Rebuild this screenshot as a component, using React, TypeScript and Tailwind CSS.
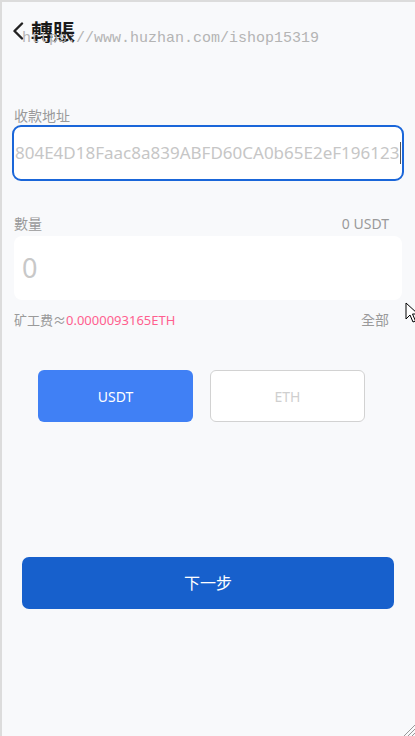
import React from 'react';

const cjk = { fontFamily: '"Noto Sans", "Noto Sans CJK TC", "Noto Sans CJK SC", sans-serif' };

export default function App() {
  return (
    <div
      className="relative w-[415px] h-[736px] overflow-hidden bg-[#f8f9fb] border-l-2 border-t-2 border-[#dcdcdc]"
      style={cjk}
    >
      {/* ─── Header ─── */}
      <div className="flex items-center h-[28px] mt-[15px] pl-[10px]">
        <svg width="12" height="18" viewBox="0 0 12 18" fill="none" className="mr-[7px]">
          <path d="M10 1.5L2.5 9l7.5 7.5" stroke="#222" strokeWidth="2.4" strokeLinecap="round" strokeLinejoin="round" />
        </svg>
        <span className="text-[22px] font-bold text-[#1a1a1a] leading-none">轉賬</span>
      </div>

      {/* watermark */}
      <div
        className="absolute left-[20px] top-[29px] text-[15px] leading-none text-[#b4b4b4] whitespace-nowrap"
        style={{ fontFamily: '"Liberation Mono", monospace' }}
      >
        https://www.huzhan.com/ishop15319
      </div>

      {/* ─── Address ─── */}
      <div className="mt-[62px] pl-[12px] text-[14px] leading-[18px] text-[#9a9a9a]">收款地址</div>
      <div className="ml-[10px] w-[392px] h-[56px] bg-white border-2 border-[#1a66d9] rounded-[9px] flex items-center overflow-hidden">
        <span className="pl-[1px] text-[17px] text-[#c6c6c6] whitespace-nowrap">
          804E4D18Faac8a839ABFD60CA0b65E2eF196123
        </span>
        <span className="ml-[1px] w-[1px] h-[22px] bg-[#555]" />
      </div>

      {/* ─── Amount ─── */}
      <div className="mt-[33px] pl-[12px] pr-[26px] flex justify-between items-center text-[14px] leading-[20px] text-[#9a9a9a]">
        <span>數量</span>
        <span>0 USDT</span>
      </div>
      <div className="mt-[2px] ml-[12px] w-[388px] h-[64px] bg-white rounded-[8px] flex items-center pl-[8px]">
        <span className="text-[27px] text-[#c8c8c8]">0</span>
      </div>

      <div className="mt-[10px] pl-[12px] pr-[26px] flex justify-between items-center text-[13px] leading-[20px] text-[#9a9a9a]">
        <span>
          矿工费≈<span className="text-[#ff5f8f]">0.0000093165ETH</span>
        </span>
        <span className="text-[14px]">全部</span>
      </div>

      {/* mouse pointer */}
      <svg className="absolute left-[403px] top-[300px]" width="14" height="22" viewBox="0 0 14 22">
        <path d="M1 1v16l4-4 3 7 2.5-1-3-7h5.5z" fill="#fff" stroke="#000" strokeWidth="1" strokeLinejoin="round" />
      </svg>

      {/* ─── Token select ─── */}
      <div className="mt-[40px] pl-[36px] flex gap-[17px]">
        <button className="w-[155px] h-[52px] rounded-[6px] bg-[#4080f5] text-white text-[14px]">USDT</button>
        <button className="w-[155px] h-[52px] rounded-[6px] bg-white border border-[#d2d2d2] text-[#cfcfcf] text-[14px]">
          ETH
        </button>
      </div>

      {/* ─── Next ─── */}
      <div className="mt-[135px] pl-[20px]">
        <button className="w-[372px] h-[52px] rounded-[7px] bg-[#1760cc] text-white text-[16px]">下一步</button>
      </div>

      {/* resize grip */}
      <svg className="absolute right-0 bottom-0" width="14" height="14" viewBox="0 0 14 14">
        <path d="M14 3L3 14M14 7L7 14M14 11L11 14" stroke="#999" strokeWidth="1" />
      </svg>
    </div>
  );
}
